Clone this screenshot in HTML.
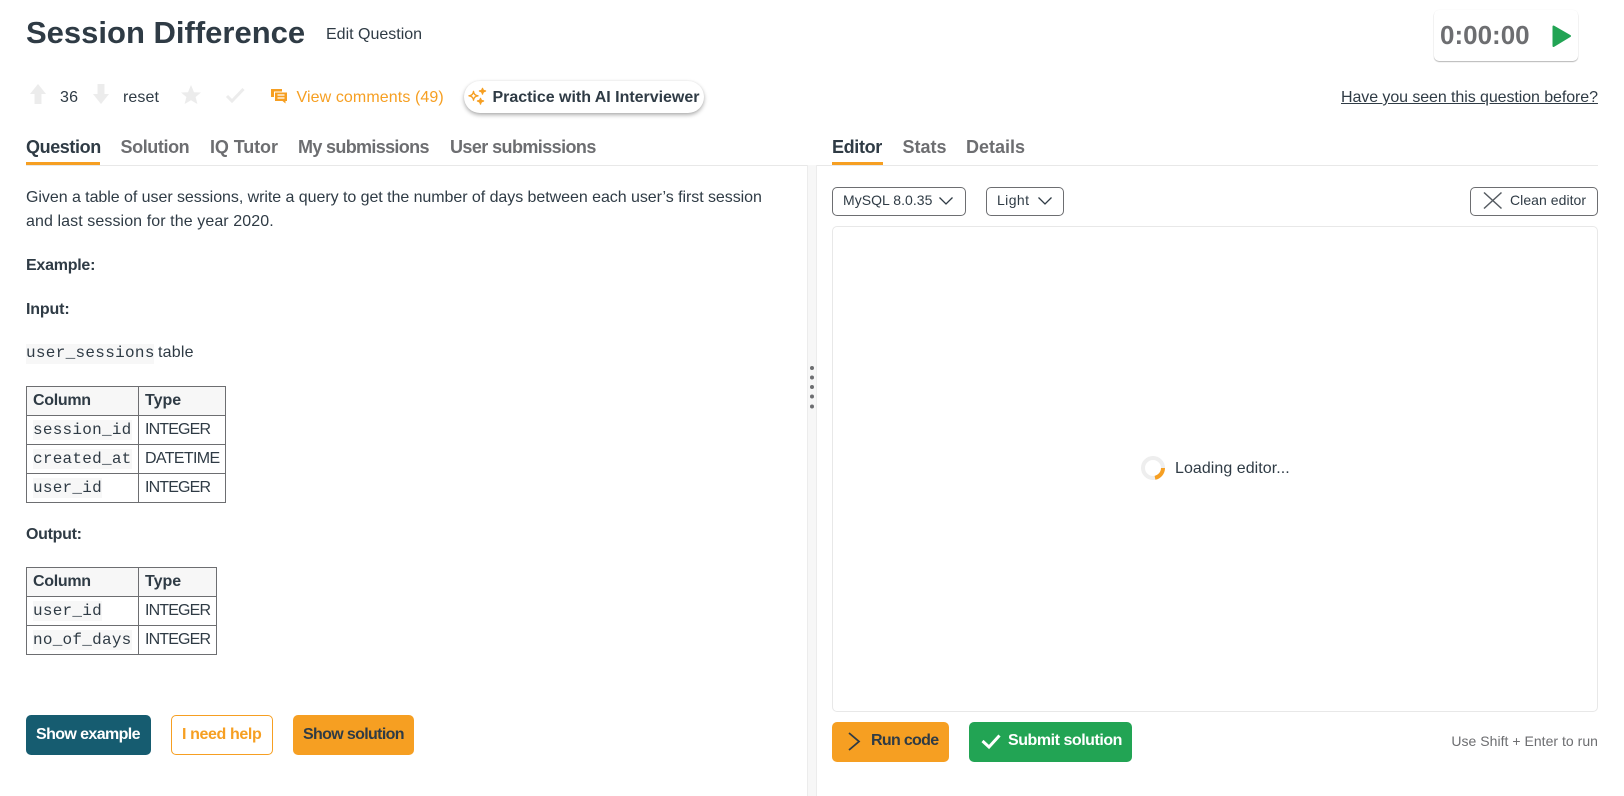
<!DOCTYPE html>
<html lang="en">
<head>
<meta charset="utf-8">
<title>Session Difference</title>
<style>
html,body{margin:0;padding:0;background:#fff;width:1624px;height:796px;overflow:hidden}
body{position:relative;font-family:"Liberation Sans",sans-serif;font-size:16px;color:#2f3b45}
.t{position:absolute;white-space:nowrap;line-height:24px}
.b{font-weight:700}
.tab{position:absolute;white-space:nowrap;line-height:24px;top:135px;font-size:18px;font-weight:700;color:#6d6e71}
.on{color:#2f3b45}
.box{position:absolute;box-sizing:border-box}
.btn{position:absolute;box-sizing:border-box;border-radius:5px;height:40px}
.sel{position:absolute;box-sizing:border-box;top:187px;height:29px;border:1px solid #6d6e71;border-radius:5px}
.m{font-family:"Liberation Mono",monospace;letter-spacing:.3px;color:#2f3b45}
.cb{position:absolute;background:#f7f7f7;height:20px}
svg{position:absolute;overflow:visible}
table{position:absolute;left:26px;border-collapse:collapse;table-layout:fixed}
td,th{border:1px solid #6d6e71;height:28px;padding:0 6px 0 6px;line-height:24px;text-align:left;box-sizing:border-box;white-space:nowrap;font-size:16px;font-weight:400;letter-spacing:-.85px}
th{background:#f7f7f7;font-weight:700;letter-spacing:-.3px}
td code{font-family:"Liberation Mono",monospace;letter-spacing:.25px;background:#f7f7f7;display:inline-block;height:20px;line-height:20px;vertical-align:middle}
</style>
</head>
<body>
<div class="t b" style="left:26px;top:16px;font-size:31px;line-height:34px;letter-spacing:0">Session Difference</div>
<div class="t" style="left:326px;top:23px">Edit Question</div>

<div class="box" style="left:1434px;top:10px;width:144px;height:51px;border-radius:5px;background:#fff;box-shadow:0 1px 1px rgba(0,0,0,.28),0 0 1px rgba(0,0,0,.08)"></div>
<div class="t b" style="left:1440px;top:23px;font-size:26px;letter-spacing:0;color:#6d6e71">0:00:00</div>
<svg style="left:0;top:0" width="1624" height="796"><path d="M1553.5 26.5 L1570 36 L1553.5 46 Z" fill="#22a454" stroke="#22a454" stroke-width="2" stroke-linejoin="round"/></svg>

<!-- action row -->
<svg style="left:0;top:0" width="1624" height="796">
<path d="M38 84 L46 94 L41.5 94 L41.5 104 L34.5 104 L34.5 94 L30 94 Z" fill="#ececec"/>
<path d="M101 104 L109 94 L104.5 94 L104.5 84 L97.5 84 L97.5 94 L93 94 Z" fill="#ececec"/>
<path d="M191 85 L194 92.2 L201 92.5 L195.6 97 L197.4 104 L191 100.2 L184.6 104 L186.4 97 L181 92.5 L188 92.2 Z" fill="#ececec"/>
<path d="M227 96 L232 101 L243.5 89" fill="none" stroke="#ececec" stroke-width="3"/>
<path d="M271 89 H282 V91.5 H274 V97 H271 Z" fill="#f69f22"/>
<path d="M275 92.5 H287 V101 H285.5 V103.5 L282.5 101 H275 Z" fill="#f69f22"/>
<path d="M277.5 95 H284.5 M277.5 98 H284.5" stroke="#fff" stroke-width="1.2"/>
</svg>
<div class="t" style="left:60px;top:86px;letter-spacing:.2px">36</div>
<div class="t" style="left:123px;top:86px;letter-spacing:.1px">reset</div>
<div class="t" style="left:296.5px;top:86px;color:#f69f22;letter-spacing:.1px">View comments (49)</div>

<div class="box" style="left:464px;top:81px;width:240px;height:32px;border-radius:16px;background:#fff;box-shadow:0 2px 4px rgba(0,0,0,.32),0 0 2px rgba(0,0,0,.05)"></div>
<svg style="left:0;top:-1px" width="1624" height="796">
<g fill="none" stroke="#f69f22" stroke-width="1.4" stroke-linejoin="round">
<path d="M473.5 92.5 Q474 96.5 478 96.8 Q474 97.2 473.5 101.2 Q473 97.2 469 96.8 Q473 96.5 473.5 92.5 Z"/>
<path d="M482.5 89.5 Q482.8 91.8 485.5 92 Q482.8 92.3 482.5 95 Q482.2 92.3 479.5 92 Q482.2 91.8 482.5 89.5 Z" fill="#f69f22"/>
<path d="M480.5 99.5 Q480.8 101.8 483.5 102 Q480.8 102.3 480.5 105 Q480.2 102.3 477.5 102 Q480.2 101.8 480.5 99.5 Z" fill="#f69f22"/>
</g></svg>
<div class="t b" style="left:492.5px;top:86px;letter-spacing:-.02px">Practice with AI Interviewer</div>

<div class="t" style="left:1341px;top:86px;text-decoration:underline;letter-spacing:-.08px">Have you seen this question before?</div>

<!-- tabs -->
<div class="tab on" style="left:26px;letter-spacing:-.4px">Question</div>
<div class="tab" style="left:120.5px;letter-spacing:-.4px">Solution</div>
<div class="tab" style="left:210px;letter-spacing:-.1px">IQ Tutor</div>
<div class="tab" style="left:298px;letter-spacing:-.66px">My submissions</div>
<div class="tab" style="left:450px;letter-spacing:-.58px">User submissions</div>
<div class="box" style="left:26px;top:165px;width:781px;height:1px;background:#e8e8e8"></div>
<div class="box" style="left:26px;top:162px;width:74px;height:3px;background:#f69f22"></div>

<div class="tab on" style="left:832px;letter-spacing:-.35px">Editor</div>
<div class="tab" style="left:902.5px">Stats</div>
<div class="tab" style="left:966px">Details</div>
<div class="box" style="left:817px;top:165px;width:781px;height:1px;background:#e8e8e8"></div>
<div class="box" style="left:832px;top:162px;width:51px;height:3px;background:#f69f22"></div>

<!-- gutter -->
<div class="box" style="left:807px;top:165px;width:10px;height:631px;background:#f7f7f7;border-left:1px solid #ececec;border-right:1px solid #ececec"></div>
<svg style="left:0;top:0" width="1624" height="796"><g fill="#6d6e71">
<circle cx="812" cy="368" r="2"/><circle cx="812" cy="377.5" r="2"/><circle cx="812" cy="387" r="2"/><circle cx="812" cy="396.5" r="2"/><circle cx="812" cy="406.5" r="2"/></g></svg>

<!-- question text -->
<div class="t" style="left:26px;top:186px;letter-spacing:-.05px">Given a table of user sessions, write a query to get the number of days between each user’s first session</div>
<div class="t" style="left:26px;top:210px;letter-spacing:.09px">and last session for the year 2020.</div>
<div class="t b" style="left:26px;top:254px;letter-spacing:-.25px">Example:</div>
<div class="t b" style="left:26px;top:298px;letter-spacing:-.15px">Input:</div>
<div class="cb" style="left:26px;top:344px;width:128px"></div>
<div class="t m" style="left:26px;top:341px">user_sessions</div>
<div class="t" style="left:158px;top:341px;letter-spacing:.2px">table</div>

<table style="top:386px;width:199px"><colgroup><col style="width:112px"><col style="width:87px"></colgroup>
<tr style="height:29px"><th>Column</th><th style="letter-spacing:0">Type</th></tr>
<tr style="height:29px"><td><code>session_id</code></td><td>INTEGER</td></tr>
<tr style="height:29px"><td><code>created_at</code></td><td style="letter-spacing:-.65px">DATETIME</td></tr>
<tr style="height:29px"><td><code>user_id</code></td><td>INTEGER</td></tr>
</table>

<div class="t b" style="left:26px;top:523px;letter-spacing:-.3px">Output:</div>

<table style="top:567px;width:190px"><colgroup><col style="width:112px"><col style="width:78px"></colgroup>
<tr style="height:29px"><th>Column</th><th style="letter-spacing:0">Type</th></tr>
<tr style="height:29px"><td><code>user_id</code></td><td>INTEGER</td></tr>
<tr style="height:29px"><td><code>no_of_days</code></td><td>INTEGER</td></tr>
</table>

<!-- left buttons -->
<div class="btn" style="left:26px;top:715px;width:125px;background:#165c70"></div>
<div class="t b" style="left:36px;top:723px;color:#fff;letter-spacing:-.6px">Show example</div>
<div class="btn" style="left:171px;top:715px;width:102px;background:#fff;border:1px solid #f69f22"></div>
<div class="t b" style="left:182px;top:723px;color:#f69f22;letter-spacing:-.38px">I need help</div>
<div class="btn" style="left:293px;top:715px;width:121px;background:#f69f22"></div>
<div class="t b" style="left:303px;top:723px;letter-spacing:-.65px">Show solution</div>

<!-- editor controls -->
<div class="sel" style="left:832px;width:134px"></div>
<div class="t" style="left:843px;top:188px;font-size:14px;letter-spacing:.04px">MySQL 8.0.35</div>
<div class="sel" style="left:986px;width:78px"></div>
<div class="t" style="left:997px;top:188px;font-size:14px;letter-spacing:.4px">Light</div>
<div class="sel" style="left:1470px;width:128px"></div>
<div class="t" style="left:1510px;top:188px;font-size:14px;letter-spacing:.05px">Clean editor</div>
<svg style="left:0;top:0" width="1624" height="796"><g fill="none" stroke="#2f3b45" stroke-width="1.3">
<path d="M939.5 197.5 L946 204 L952.5 197.5"/>
<path d="M1038.5 197.5 L1045 204 L1051.5 197.5"/>
<path d="M1484 192.5 L1501.5 208.5 M1501.5 192.5 L1484 208.5" stroke="#555b61" stroke-width="1.5"/>
</g></svg>

<!-- editor box -->
<div class="box" style="left:832px;top:226px;width:766px;height:486px;border:1px solid #e8e8e8;border-radius:5px;background:#fff"></div>
<svg style="left:0;top:-1px" width="1624" height="796">
<circle cx="1153" cy="469" r="10" fill="none" stroke="#eeeeee" stroke-width="4"/>
<path d="M1163 469 A10 10 0 0 1 1155 478.8" fill="none" stroke="#f69f22" stroke-width="4"/>
</svg>
<div class="t" style="left:1175px;top:457px;letter-spacing:.05px">Loading editor...</div>

<!-- editor buttons -->
<div class="btn" style="left:832px;top:722px;width:117px;background:#f69f22"></div>
<svg style="left:0;top:0" width="1624" height="796"><path d="M849 733 L859 741.5 L849 750" fill="none" stroke="#2f3b45" stroke-width="1.8"/></svg>
<div class="t b" style="left:871px;top:729px;letter-spacing:-.68px">Run code</div>
<div class="btn" style="left:969px;top:722px;width:163px;background:#22a454"></div>
<svg style="left:0;top:0" width="1624" height="796"><path d="M982.5 741 L989 747 L999.5 735.5" fill="none" stroke="#fff" stroke-width="3"/></svg>
<div class="t b" style="left:1008px;top:729px;color:#fff;letter-spacing:-.46px">Submit solution</div>
<div class="t" style="right:26px;top:729px;font-size:14px;color:#6d6e71;letter-spacing:.03px">Use Shift + Enter to run</div>
</body>
</html>
